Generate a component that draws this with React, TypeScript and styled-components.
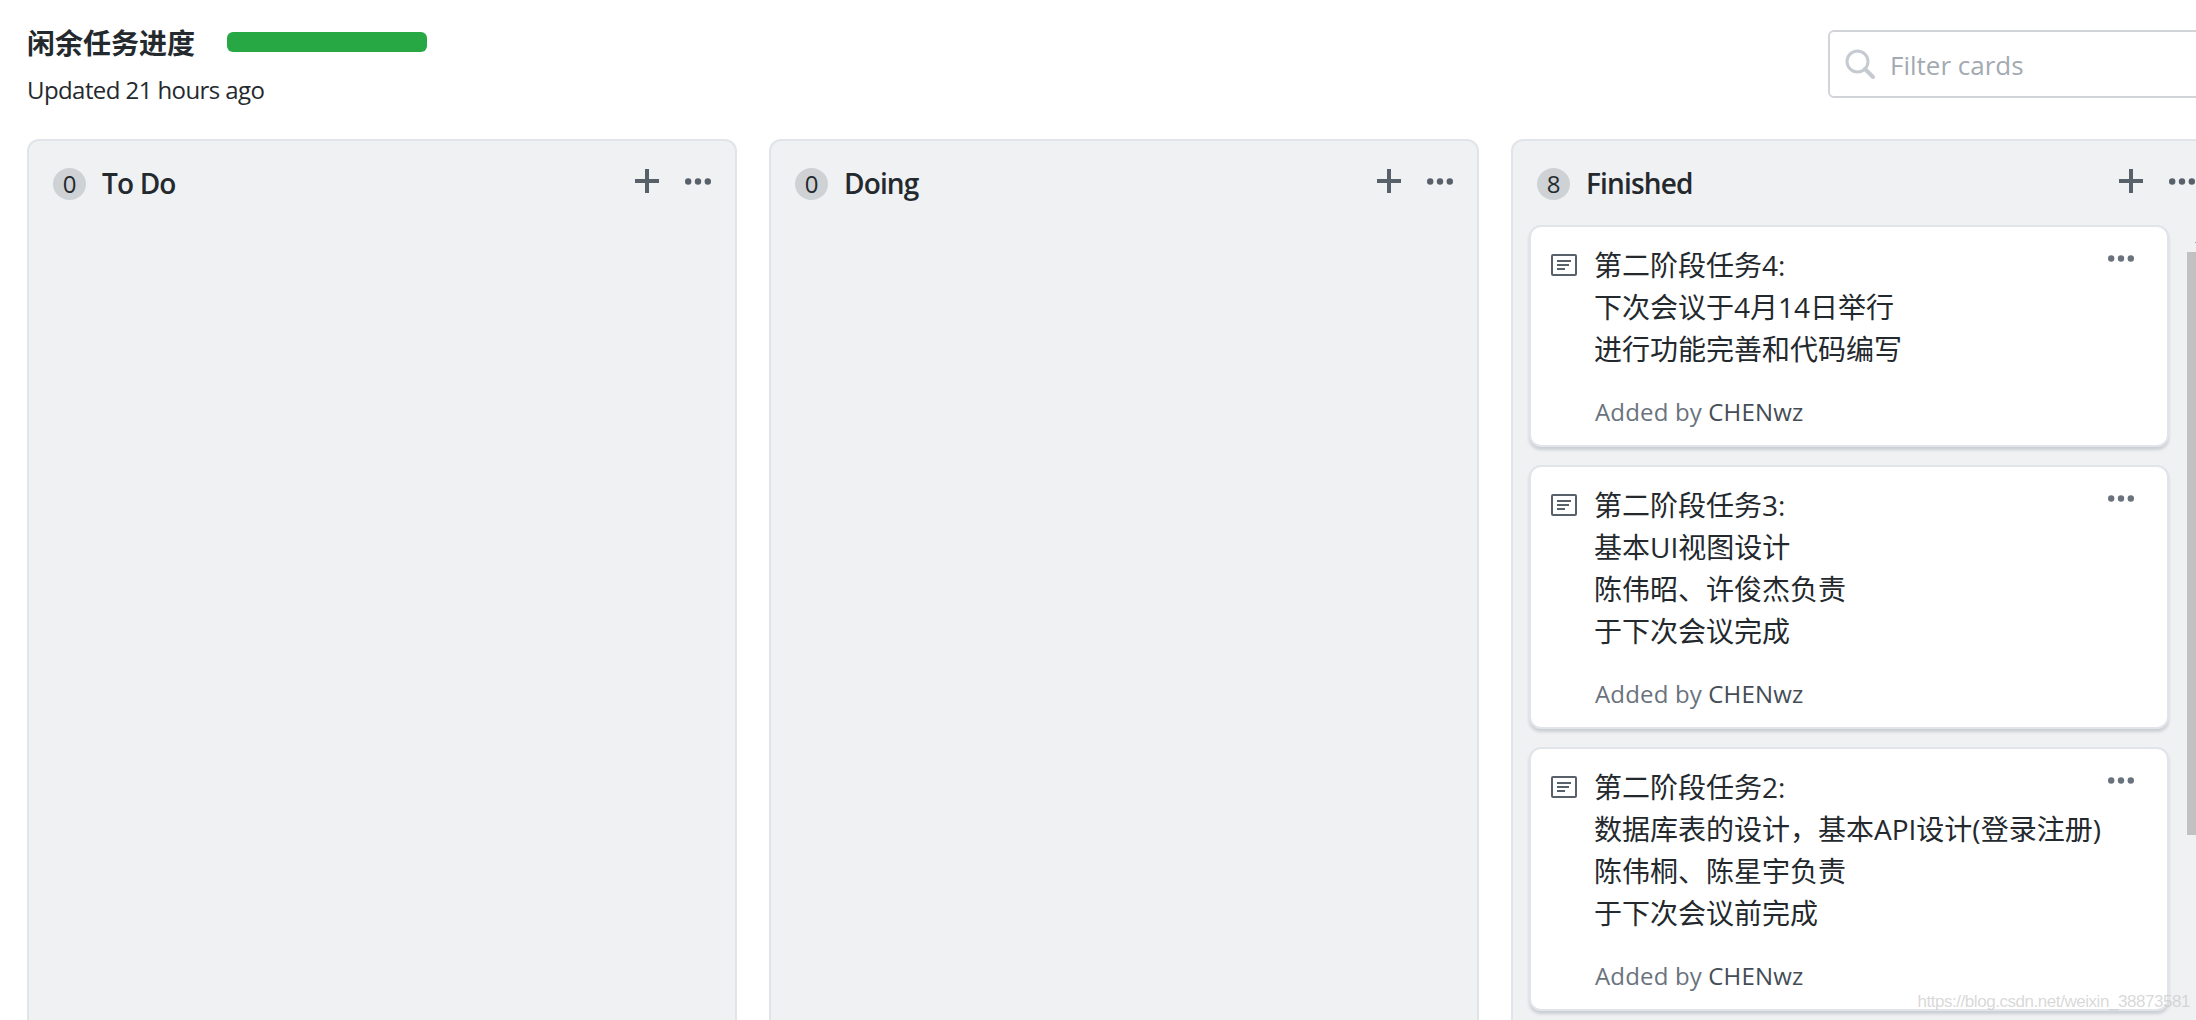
import React from "react";
import styled, { createGlobalStyle } from "styled-components";

interface CardData {
  lines: string[];
  author: string;
}

interface ColumnData {
  title: string;
  count: number;
  cards: CardData[];
}

const columns: ColumnData[] = [
  { title: "To Do", count: 0, cards: [] },
  { title: "Doing", count: 0, cards: [] },
  {
    title: "Finished",
    count: 8,
    cards: [
      { lines: ["第二阶段任务4:", "下次会议于4月14日举行", "进行功能完善和代码编写"], author: "CHENwz" },
      { lines: ["第二阶段任务3:", "基本UI视图设计", "陈伟昭、许俊杰负责", "于下次会议完成"], author: "CHENwz" },
      {
        lines: ["第二阶段任务2:", "数据库表的设计，基本API设计(登录注册)", "陈伟桐、陈星宇负责", "于下次会议前完成"],
        author: "CHENwz",
      },
    ],
  },
];

const GlobalStyle = createGlobalStyle`
  html, body {
    margin: 0;
    padding: 0;
    background: #fff;
  }
  * {
    box-sizing: border-box;
  }
`;

const fontStack = `"Open Sans", "Noto Sans CJK SC", sans-serif`;

const Page = styled.div`
  position: relative;
  width: 2196px;
  height: 1020px;
  overflow: hidden;
  background: #fff;
  color: #24292e;
  font-family: ${fontStack};
`;

const Header = styled.header`
  display: flex;
  align-items: flex-start;
  height: 139px;
  padding: 23px 0 0 27px;
`;

const HeaderLeft = styled.div`
  display: flex;
  flex-direction: column;
  gap: 9px;
`;

const TitleRow = styled.div`
  display: flex;
  align-items: center;
  gap: 32px;
`;

const ProjectTitle = styled.h1`
  margin: 0;
  font-size: 28px;
  line-height: 40px;
  font-weight: 700;
  color: #24292e;
`;

const ProgressBar = styled.div`
  width: 200px;
  height: 20px;
  margin-top: -2px;
  border-radius: 6px;
  background: #28a745;
`;

const Updated = styled.div`
  font-size: 24px;
  line-height: 36px;
  letter-spacing: -0.58px;
  color: #24292e;
`;

const FilterBox = styled.label`
  display: flex;
  flex-shrink: 0;
  align-items: center;
  gap: 15px;
  width: 500px;
  height: 68px;
  margin-top: 7px;
  margin-left: auto;
  margin-right: -132px;
  padding-left: 15px;
  border: 2px solid #d1d5da;
  border-radius: 6px;
  background: #fff;
`;

const FilterInput = styled.input`
  flex: 1;
  min-width: 0;
  height: 40px;
  margin-top: 2px;
  border: none;
  outline: none;
  padding: 0;
  background: transparent;
  font-family: ${fontStack};
  font-size: 26px;
  color: #24292e;

  &::placeholder {
    color: #a3aab1;
    opacity: 1;
  }
`;

const Board = styled.main`
  display: flex;
  gap: 32px;
  padding-left: 27px;
`;

const Column = styled.section`
  flex-shrink: 0;
  width: 710px;
  height: 1000px;
  border: 2px solid #e1e4e8;
  border-radius: 12px;
  background: #eff1f3;
`;

const ColumnHeader = styled.div`
  display: flex;
  align-items: center;
  height: 84px;
  padding: 0 24px 0 24px;
`;

const CountBadge = styled.span`
  display: flex;
  align-items: center;
  justify-content: center;
  width: 33px;
  height: 32px;
  margin-top: 1px;
  border-radius: 50%;
  background: #cfd2d5;
  font-size: 24px;
  color: #24292e;
`;

const ColumnTitle = styled.h3`
  flex: 1;
  margin: 0 0 0 16px;
  font-size: 28px;
  line-height: 40px;
  font-weight: 600;
  letter-spacing: -0.85px;
  color: #24292e;
`;

const HeaderActions = styled.div`
  display: flex;
  align-items: center;
  gap: 26px;
  margin-top: -4px;
`;

const ColumnBody = styled.div`
  display: flex;
  align-items: flex-start;
  padding-left: 16px;
`;

const CardList = styled.div`
  display: flex;
  flex-direction: column;
  flex-shrink: 0;
  gap: 18px;
  width: 640px;
`;

const Card = styled.article`
  display: flex;
  align-items: flex-start;
  padding: 17px 33px 12px 20px;
  border: 2px solid #e1e4e8;
  border-radius: 12px;
  background: #fff;
  box-shadow: 0 3px 3px rgba(149, 157, 165, 0.4);
`;

const NoteSlot = styled.div`
  display: flex;
  flex-shrink: 0;
  margin: 10px 17px 0 0;
`;

const CardContent = styled.div`
  flex: 1;
  min-width: 0;
`;

const NoteText = styled.div`
  font-size: 28px;
  line-height: 42px;
  color: #24292e;
  white-space: nowrap;
`;

const CardMeta = styled.div`
  margin: 21px 0 0 1px;
  font-size: 24px;
  line-height: 42px;
  letter-spacing: 0.16px;
  color: #6a737d;
`;

const Author = styled.span`
  color: #444d56;
`;

const CardMenu = styled.div`
  display: flex;
  flex-shrink: 0;
  margin: 11px 0 0 -26px;
`;

const Scrollbar = styled.div`
  display: flex;
  flex-direction: column;
  flex-shrink: 0;
  width: 34px;
  margin-left: 18px;
`;

const ScrollArrow = styled.div`
  display: flex;
  align-items: center;
  justify-content: center;
  height: 27px;

  &::before {
    content: "";
    border-left: 9px solid transparent;
    border-right: 9px solid transparent;
    border-bottom: 9px solid #505050;
  }
`;

const ScrollThumb = styled.div`
  height: 583px;
  background: #c1c1c1;
`;

const Watermark = styled.div`
  position: absolute;
  right: 6px;
  bottom: 6px;
  font-family: "Liberation Sans", sans-serif;
  font-size: 17px;
  line-height: 24px;
  letter-spacing: -0.45px;
  color: rgba(200, 200, 200, 0.7);
`;

const SearchIcon = () => (
  <svg width="30" height="30" viewBox="0 0 30 30" fill="none" stroke="#c6cbd1" strokeWidth="3">
    <circle cx="12.5" cy="12.5" r="10.5" />
    <path d="M20 20l8 8" strokeWidth="4" strokeLinecap="round" />
  </svg>
);

const PlusIcon = () => (
  <svg width="24" height="24" viewBox="0 0 24 24" stroke="#586069" strokeWidth="4">
    <path d="M12 0v24M0 12h24" />
  </svg>
);

const DotsIcon = ({ color }: { color: string }) => (
  <svg width="26" height="7" viewBox="0 0 26 7" fill={color}>
    <circle cx="3.2" cy="3.5" r="3.2" />
    <circle cx="13" cy="3.5" r="3.2" />
    <circle cx="22.8" cy="3.5" r="3.2" />
  </svg>
);

const NoteIcon = () => (
  <svg width="26" height="22" viewBox="0 0 26 22" fill="none" stroke="#586069" strokeWidth="2">
    <rect x="1" y="1" width="24" height="20" rx="1" />
    <path d="M6 7h14M6 11h12M6 15h8" />
  </svg>
);

const App: React.FC = () => {
  return (
    <Page>
      <GlobalStyle />
      <Header>
        <HeaderLeft>
          <TitleRow>
            <ProjectTitle>闲余任务进度</ProjectTitle>
            <ProgressBar />
          </TitleRow>
          <Updated>Updated 21 hours ago</Updated>
        </HeaderLeft>
        <FilterBox>
          <SearchIcon />
          <FilterInput placeholder="Filter cards" />
        </FilterBox>
      </Header>
      <Board>
        {columns.map((column) => (
          <Column key={column.title}>
            <ColumnHeader>
              <CountBadge>{column.count}</CountBadge>
              <ColumnTitle>{column.title}</ColumnTitle>
              <HeaderActions>
                <PlusIcon />
                <DotsIcon color="#586069" />
              </HeaderActions>
            </ColumnHeader>
            {column.cards.length > 0 && (
              <ColumnBody>
                <CardList>
                  {column.cards.map((card) => (
                    <Card key={card.lines[0]}>
                      <NoteSlot>
                        <NoteIcon />
                      </NoteSlot>
                      <CardContent>
                        {card.lines.map((line) => (
                          <NoteText key={line}>{line}</NoteText>
                        ))}
                        <CardMeta>
                          Added by <Author>{card.author}</Author>
                        </CardMeta>
                      </CardContent>
                      <CardMenu>
                        <DotsIcon color="#6a737d" />
                      </CardMenu>
                    </Card>
                  ))}
                </CardList>
                <Scrollbar>
                  <ScrollArrow />
                  <ScrollThumb />
                </Scrollbar>
              </ColumnBody>
            )}
          </Column>
        ))}
      </Board>
      <Watermark>https://blog.csdn.net/weixin_38873581</Watermark>
    </Page>
  );
};

export default App;
